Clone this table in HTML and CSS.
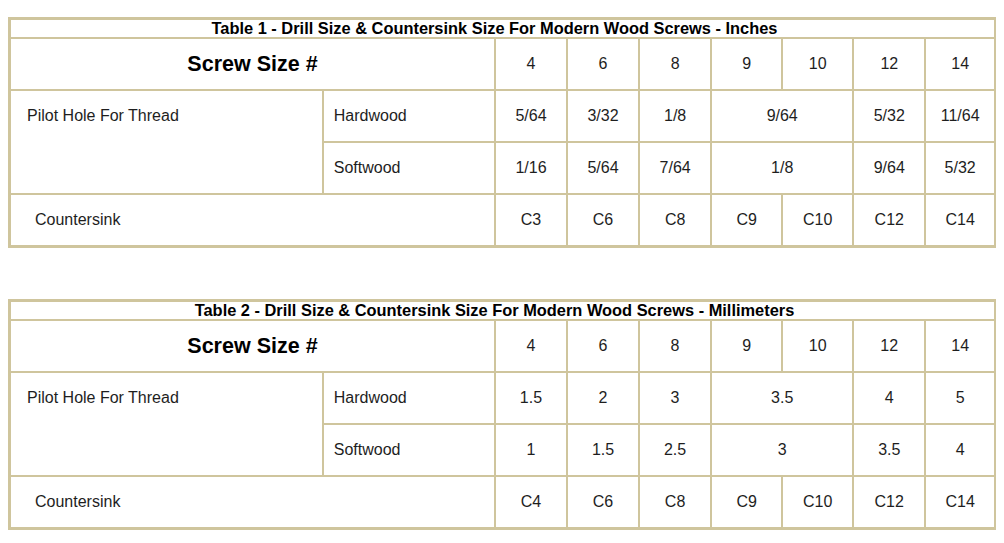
FILE: index.html
```html
<!DOCTYPE html>
<html>
<head>
<meta charset="utf-8">
<link rel="stylesheet" href="styles.css">
</head>
<body>
<div class="page">
  <table class="drill">
    <colgroup>
      <col class="c-main"><col class="c-wood">
      <col class="c-72"><col class="c-72"><col class="c-72"><col class="c-71"><col class="c-71"><col class="c-72"><col class="c-70">
    </colgroup>
    <tr><th class="title" colspan="9">Table 1 - Drill Size &amp; Countersink Size For Modern Wood Screws - Inches</th></tr>
    <tr class="row">
      <th class="screw" colspan="2">Screw Size #</th>
      <td>4</td><td>6</td><td>8</td><td>9</td><td>10</td><td>12</td><td>14</td>
    </tr>
    <tr class="row">
      <td class="pilot" rowspan="2">Pilot Hole For Thread</td>
      <td class="wood">Hardwood</td>
      <td>5/64</td><td>3/32</td><td>1/8</td><td colspan="2">9/64</td><td>5/32</td><td>11/64</td>
    </tr>
    <tr class="row">
      <td class="wood">Softwood</td>
      <td>1/16</td><td>5/64</td><td>7/64</td><td colspan="2">1/8</td><td>9/64</td><td>5/32</td>
    </tr>
    <tr class="row">
      <td class="sink" colspan="2">Countersink</td>
      <td>C3</td><td>C6</td><td>C8</td><td>C9</td><td>C10</td><td>C12</td><td>C14</td>
    </tr>
  </table>

  <table class="drill">
    <colgroup>
      <col class="c-main"><col class="c-wood">
      <col class="c-72"><col class="c-72"><col class="c-72"><col class="c-71"><col class="c-71"><col class="c-72"><col class="c-70">
    </colgroup>
    <tr><th class="title" colspan="9">Table 2 - Drill Size &amp; Countersink Size For Modern Wood Screws - Millimeters</th></tr>
    <tr class="row">
      <th class="screw" colspan="2">Screw Size #</th>
      <td>4</td><td>6</td><td>8</td><td>9</td><td>10</td><td>12</td><td>14</td>
    </tr>
    <tr class="row">
      <td class="pilot" rowspan="2">Pilot Hole For Thread</td>
      <td class="wood">Hardwood</td>
      <td>1.5</td><td>2</td><td>3</td><td colspan="2">3.5</td><td>4</td><td>5</td>
    </tr>
    <tr class="row">
      <td class="wood">Softwood</td>
      <td>1</td><td>1.5</td><td>2.5</td><td colspan="2">3</td><td>3.5</td><td>4</td>
    </tr>
    <tr class="row">
      <td class="sink" colspan="2">Countersink</td>
      <td>C4</td><td>C6</td><td>C8</td><td>C9</td><td>C10</td><td>C12</td><td>C14</td>
    </tr>
  </table>
</div>
</body>
</html>
```
FILE: styles.css
```css
html, body {
  background: #ffffff;
}
body {
  margin: 8px;
  font-family: "Liberation Sans", Arial, sans-serif;
  color: #1e1e1e;
}
.page {
  padding-top: 9px;
  display: flex;
  flex-direction: column;
  gap: 51px;
}
.drill {
  width: 989px;
  border-collapse: collapse;
  table-layout: fixed;
  border: 3px solid #cfc59d;
}
.c-main { width: 313px; }
.c-wood { width: 172px; }
.c-72 { width: 72px; }
.c-71 { width: 71px; }
.c-70 { width: 70px; }
.drill th,
.drill td {
  border: 2px solid #cfc59d;
  padding: 0;
  text-align: center;
  font-size: 16px;
  font-weight: normal;
  line-height: 18px;
  vertical-align: middle;
}
.drill .title {
  font-size: 16.4px;
  font-weight: bold;
  color: #000000;
  line-height: 17px;
  padding: 0 16px 0 0;
}
.drill .row > * {
  height: 50px;
  padding: 0;
}
.drill .screw {
  font-size: 21.5px;
  font-weight: bold;
  color: #000000;
}
.drill .pilot {
  text-align: left;
  vertical-align: top;
  padding: 16px 0 0 16px;
}
.drill .wood {
  text-align: left;
  padding-left: 10px;
}
.drill .sink {
  text-align: left;
  padding-left: 24px;
}
```
